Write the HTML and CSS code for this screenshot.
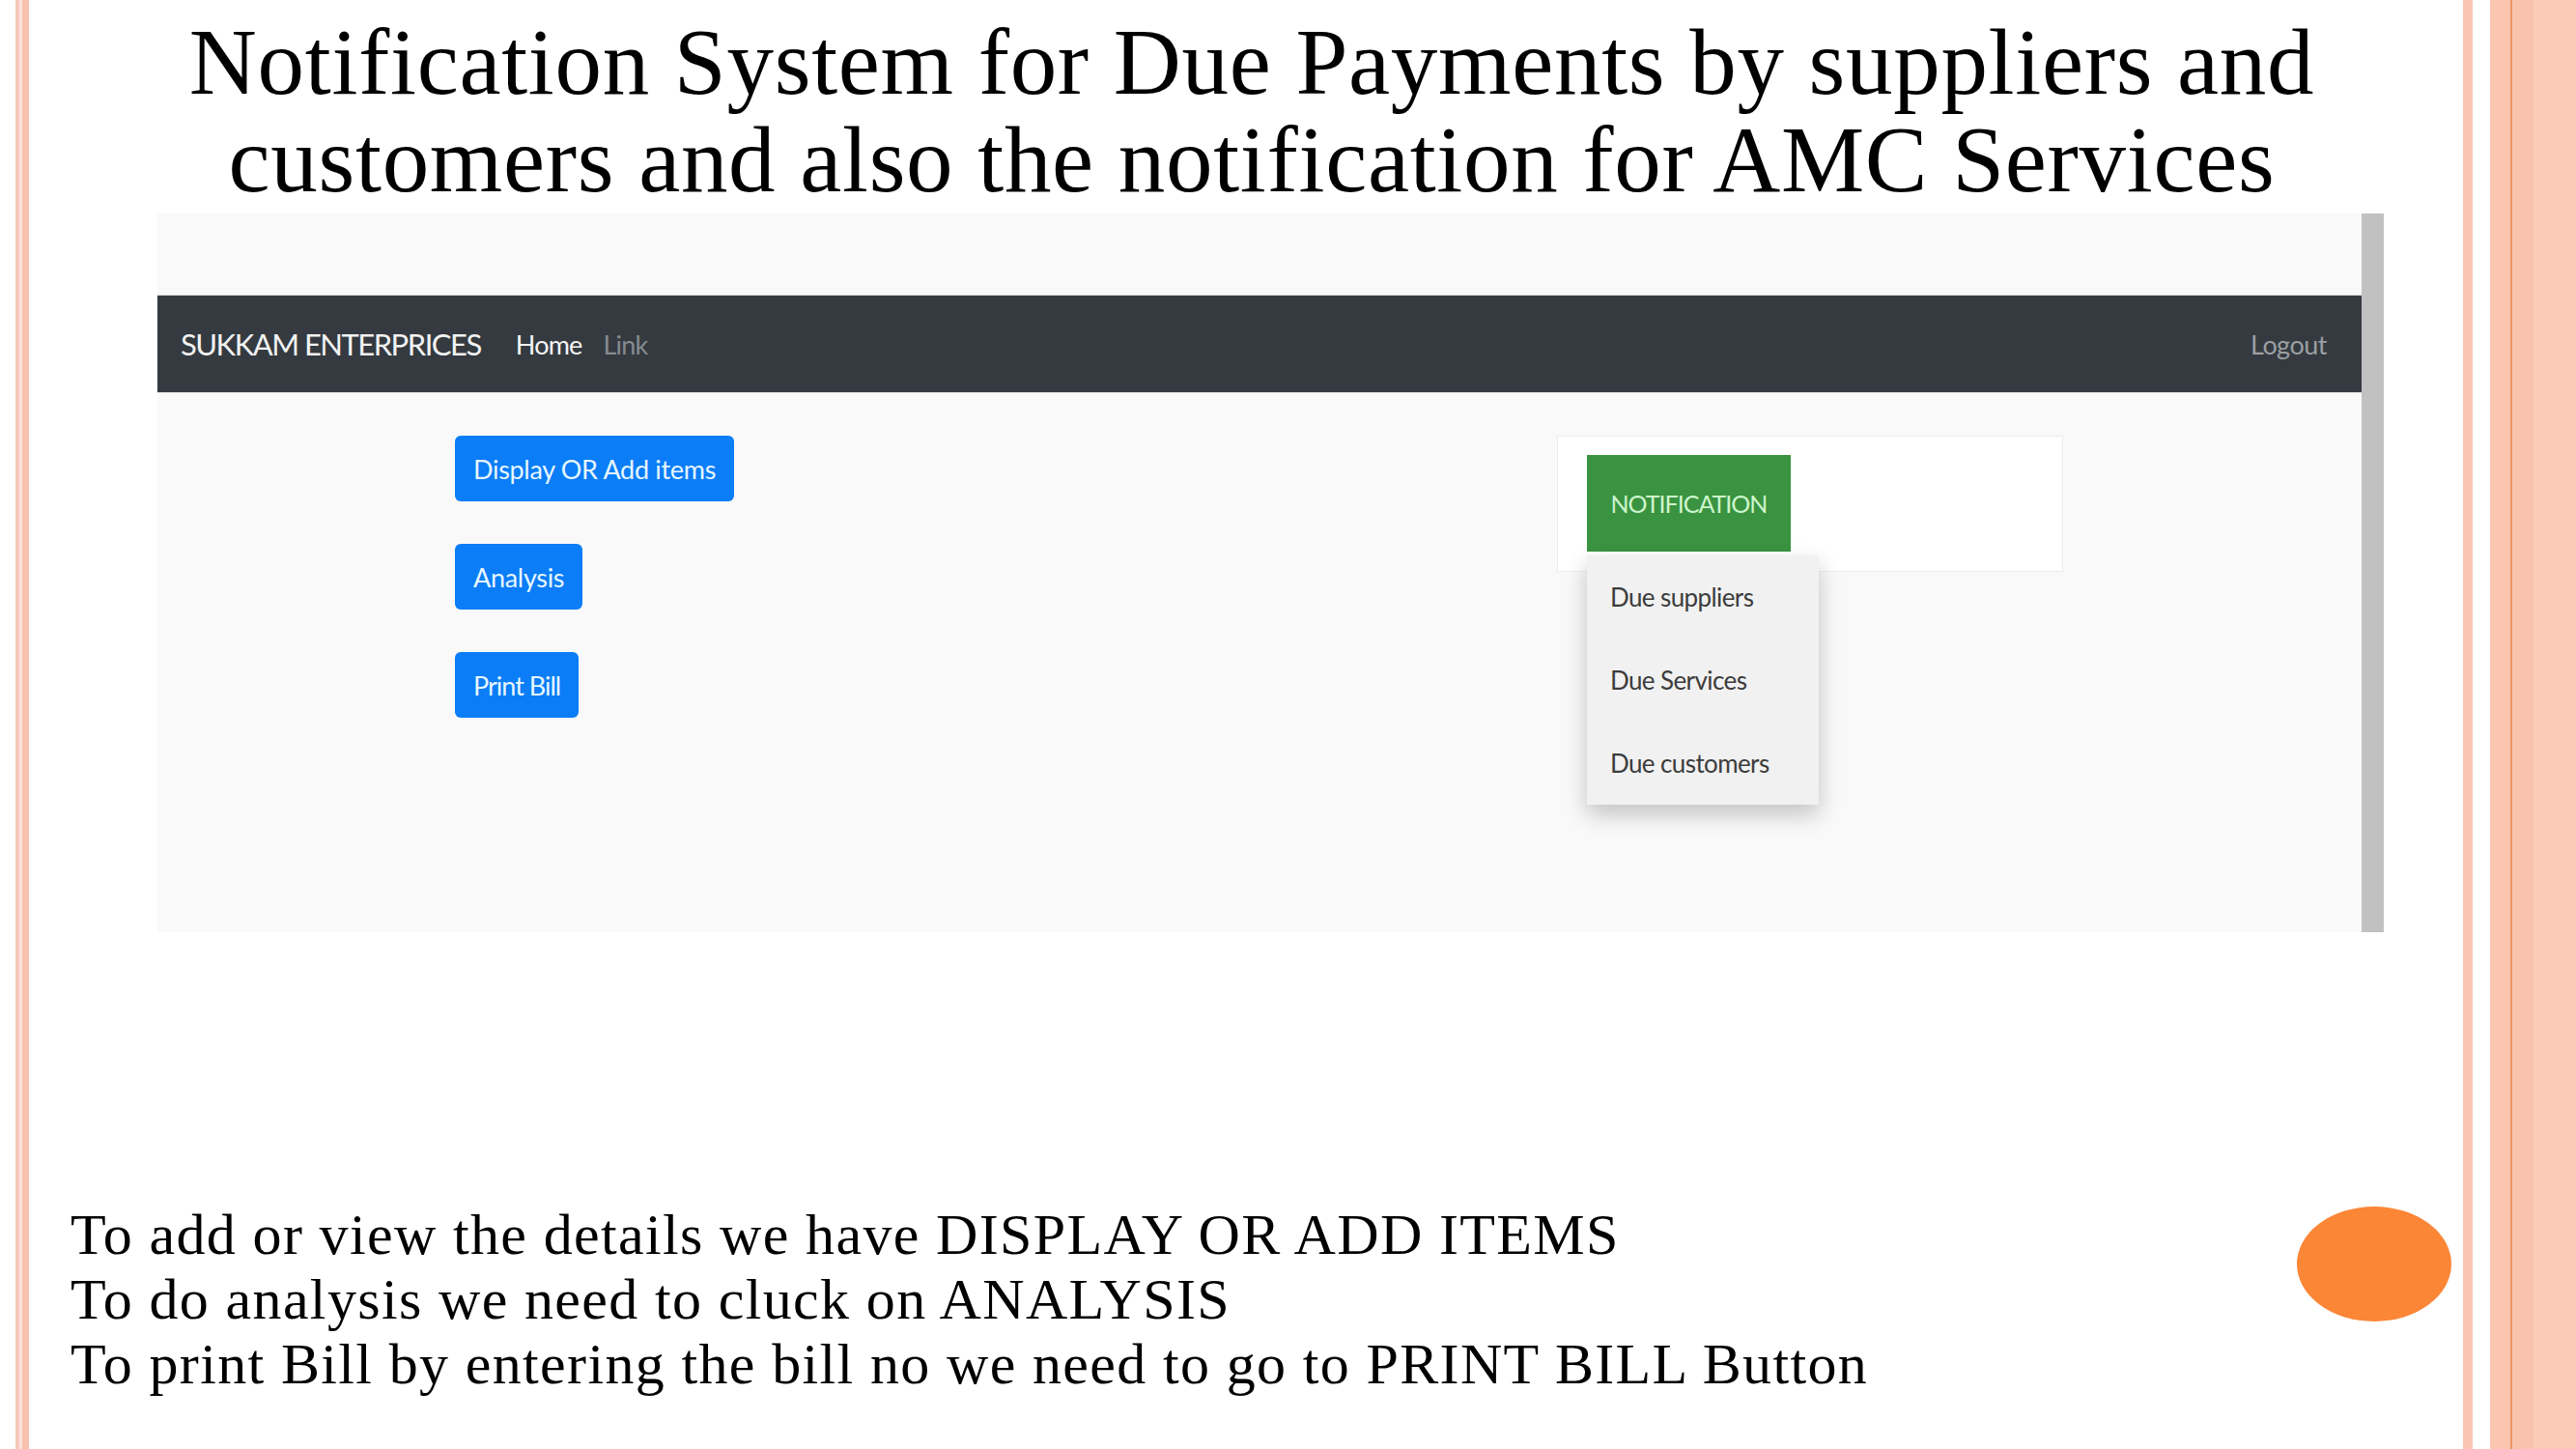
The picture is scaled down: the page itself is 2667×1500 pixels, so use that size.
FILE: index.html
```html
<!DOCTYPE html>
<html lang="en">
<head>
<meta charset="utf-8">
<title>Notification System</title>
<link rel="stylesheet" href="styles.css">
</head>
<body>
<div class="slide">
  <div class="content">
    <h1 class="title">Notification System for Due Payments by suppliers and<br>customers and also the notification for AMC Services</h1>

    <div class="shot">
      <div class="shot-main">
        <nav class="navbar">
          <div class="nav-left">
            <span class="brand">SUKKAM ENTERPRICES</span>
            <span class="nav-link active">Home</span>
            <span class="nav-link muted">Link</span>
          </div>
          <span class="nav-link logout">Logout</span>
        </nav>
        <div class="shot-body">
          <div class="actions">
            <span class="btn">Display OR Add items</span>
            <span class="btn">Analysis</span>
            <span class="btn">Print Bill</span>
          </div>
          <div class="card">
            <div class="dropdown">
              <span class="btn-green">NOTIFICATION</span>
              <ul class="menu">
                <li>Due suppliers</li>
                <li>Due Services</li>
                <li>Due customers</li>
              </ul>
            </div>
          </div>
        </div>
      </div>
      <div class="scrollbar"></div>
    </div>

    <div class="notes">
      <p class="notes-text">To add or view the details we have DISPLAY OR ADD ITEMS<br>To do analysis we need to cluck on ANALYSIS<br>To print Bill by entering the bill no we need to go to PRINT BILL Button</p>
      <div class="dot"></div>
    </div>
  </div>
</div>
</body>
</html>
```

FILE: styles.css
```css
html, body {
  margin: 0;
  padding: 0;
}

body {
  width: 2667px;
  height: 1500px;
  overflow: hidden;
  background: #ffffff;
}

.slide {
  width: 2667px;
  height: 1500px;
  background:
    linear-gradient(to right,
      transparent 0, transparent 16px,
      #f6c8b9 16px, #f6c8b9 20px,
      #fbe2da 20px, #fbe2da 23px,
      #f8c1ad 23px, #f8c1ad 30px,
      transparent 30px, transparent 2550px,
      #f9c6b5 2550px, #f9c6b5 2560px,
      #ffffff 2560px, #ffffff 2578px,
      #fbc5b0 2578px, #fbc5b0 2599px,
      #ee9763 2599px, #ee9763 2601px,
      #f9c2ad 2601px, #f9c2ad 2623px,
      #fccbb8 2623px, #fccbb8 2667px);
  display: flex;
}

.content {
  margin-left: 30px;
  width: 2520px;
  display: flex;
  flex-direction: column;
}

.title {
  margin: 0;
  padding-top: 14px;
  padding-left: 12px;
  font-family: "Liberation Serif", "DejaVu Serif", serif;
  font-weight: normal;
  font-size: 97px;
  line-height: 101px;
  letter-spacing: 0.7px;
  text-align: center;
  color: #000000;
}

/* ---------- screenshot ---------- */
.shot {
  margin-top: 5px;
  margin-left: 133px;
  width: 2305px;
  height: 744px;
  display: flex;
  background: #f9f9f9;
}

.shot-main {
  flex: 1;
  padding-top: 85px;
  display: flex;
  flex-direction: column;
}

.scrollbar {
  width: 23px;
  background: #c1c1c1;
}

.navbar {
  height: 100px;
  background: #343a40;
  display: flex;
  align-items: center;
  justify-content: space-between;
  padding: 0 36px 0 24px;
  font-family: "Lato", "DejaVu Sans", sans-serif;
  box-shadow: 0 -1px 0 #d8d8d8, 0 1px 0 #e2e2e2;
}

.nav-left {
  display: flex;
  align-items: center;
}

.brand {
  font-size: 31px;
  color: #f2f2f2;
  letter-spacing: -1.5px;
  margin-right: 36px;
}

.nav-link {
  font-size: 27px;
  letter-spacing: -0.8px;
}

.active {
  color: #f4f4f4;
  margin-right: 22px;
}

.muted {
  color: #878b90;
}

.logout {
  color: #9c9fa3;
  letter-spacing: -0.5px;
}

.shot-body {
  display: flex;
  align-items: flex-start;
  padding-top: 45px;
  padding-left: 308px;
  font-family: "Lato", "DejaVu Sans", sans-serif;
}

.actions {
  width: 1141px;
  display: flex;
  flex-direction: column;
  align-items: flex-start;
  gap: 44px;
}

.btn {
  display: flex;
  align-items: center;
  height: 68px;
  padding: 0 19px;
  background: #0a7df7;
  color: #e6f6ff;
  border-radius: 6px;
  font-size: 27px;
  letter-spacing: -0.3px;
}

.btn:last-child {
  letter-spacing: -1px;
}

.card {
  width: 524px;
  height: 141px;
  box-sizing: border-box;
  background: #ffffff;
  border: 1px solid #ececec;
  padding: 19px 0 0 30px;
}

.dropdown {
  position: relative;
  width: 211px;
}

.btn-green {
  display: flex;
  align-items: center;
  justify-content: center;
  width: 211px;
  height: 100px;
  background: #3a9340;
  color: #cdf5cd;
  font-size: 25px;
  letter-spacing: -1px;
}

.menu {
  position: absolute;
  left: 0;
  top: 104px;
  width: 240px;
  margin: 0;
  padding: 0;
  list-style: none;
  background: #f1f1f1;
  box-shadow: 0 10px 22px rgba(0, 0, 0, 0.22);
}

.menu li {
  height: 86px;
  display: flex;
  align-items: center;
  padding-left: 24px;
  font-size: 26px;
  letter-spacing: -0.6px;
  color: #3c3c3c;
}

/* ---------- notes ---------- */
.notes {
  margin-top: 280px;
  display: flex;
  align-items: flex-start;
  justify-content: space-between;
}

.notes-text {
  margin: 0;
  padding-left: 43px;
  font-family: "Liberation Serif", "DejaVu Serif", serif;
  font-size: 60px;
  line-height: 67px;
  letter-spacing: 1.35px;
  color: #000000;
}

.dot {
  width: 160px;
  height: 119px;
  margin-top: 4px;
  margin-right: 12px;
  border-radius: 50%;
  background: #fb8636;
}
```
